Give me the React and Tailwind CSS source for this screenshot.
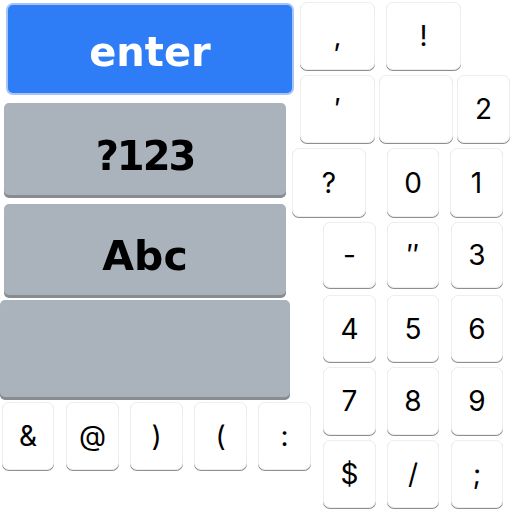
import React from 'react';

const KEYS = [
  { label: ',', pos: 'left-[300px] top-[2px] w-[75px] h-[68px]' },
  { label: '!', pos: 'left-[386px] top-[2px] w-[75px] h-[68px]' },
  { label: '′', pos: 'left-[300px] top-[75px] w-[75px] h-[68px]' },
  { label: '', pos: 'left-[379px] top-[75px] w-[74px] h-[68px]' },
  { label: '2', pos: 'left-[457px] top-[75px] w-[53px] h-[68px]' },
  { label: '?', pos: 'left-[292px] top-[148px] w-[74px] h-[69px]' },
  { label: '0', pos: 'left-[387px] top-[148px] w-[52px] h-[69px]' },
  { label: '1', pos: 'left-[450px] top-[148px] w-[53px] h-[69px]' },
  { label: '-', pos: 'left-[323px] top-[222px] w-[53px] h-[66px]' },
  { label: '″', pos: 'left-[387px] top-[222px] w-[52px] h-[66px]' },
  { label: '3', pos: 'left-[451px] top-[222px] w-[52px] h-[66px]' },
  { label: '4', pos: 'left-[323px] top-[295px] w-[53px] h-[67px]' },
  { label: '5', pos: 'left-[387px] top-[295px] w-[52px] h-[67px]' },
  { label: '6', pos: 'left-[451px] top-[295px] w-[52px] h-[67px]' },
  { label: '7', pos: 'left-[323px] top-[367px] w-[53px] h-[68px]' },
  { label: '8', pos: 'left-[387px] top-[367px] w-[52px] h-[68px]' },
  { label: '9', pos: 'left-[451px] top-[367px] w-[52px] h-[68px]' },
  { label: '$', pos: 'left-[323px] top-[440px] w-[53px] h-[68px]' },
  { label: '/', pos: 'left-[387px] top-[440px] w-[52px] h-[68px]' },
  { label: ';', pos: 'left-[451px] top-[440px] w-[52px] h-[68px]' },
  { label: '&', pos: 'left-[2px] top-[402px] w-[52px] h-[68px]' },
  { label: '@', pos: 'left-[66px] top-[402px] w-[53px] h-[68px]' },
  { label: ')', pos: 'left-[130px] top-[402px] w-[53px] h-[68px]' },
  { label: '(', pos: 'left-[194px] top-[402px] w-[53px] h-[68px]' },
  { label: ':', pos: 'left-[258px] top-[402px] w-[53px] h-[68px]' },
];

const Key = ({ label, pos }) => (
  <div
    className={`absolute ${pos} flex items-center justify-center rounded-[7px] bg-white border border-[#eeeeee] shadow-[0_1px_0_#8e8e8e] text-[28px] text-black font-['Inter',sans-serif]`}
  >
    {label}
  </div>
);

const BigKey = ({ pos, color, children }) => (
  <div
    className={`absolute ${pos} flex items-center justify-center rounded-[5px] ${color} blur-[0.6px] font-['DejaVu_Sans',sans-serif] font-bold`}
  >
    {children}
  </div>
);

export default function App() {
  return (
    <div className="relative w-[512px] h-[512px] overflow-hidden bg-white">
      {/* big function keys, upscaled and soft */}
      <BigKey
        pos="left-[8px] top-[5px] w-[284px] h-[88px] pt-[6px]"
        color="bg-[#2e7cf6] shadow-[0_0_0_2px_#a8c4f5] text-white text-[40px]"
      >
        enter
      </BigKey>
      <BigKey
        pos="left-[4px] top-[103px] w-[282px] h-[92px] pt-[14px]"
        color="bg-[#aab3bb] shadow-[0_3px_0_#868c92] text-black text-[40px] tracking-[-2px]"
      >
        ?123
      </BigKey>
      <BigKey
        pos="left-[4px] top-[204px] w-[282px] h-[91px] pt-[14px]"
        color="bg-[#aab3bb] shadow-[0_3px_0_#868c92] text-black text-[41px]"
      >
        Abc
      </BigKey>
      <BigKey
        pos="left-0 top-[300px] w-[290px] h-[97px]"
        color="bg-[#aab3bb] shadow-[0_3px_0_#868c92]"
      />

      {KEYS.map((k, i) => (
        <Key key={i} label={k.label} pos={k.pos} />
      ))}
    </div>
  );
}
